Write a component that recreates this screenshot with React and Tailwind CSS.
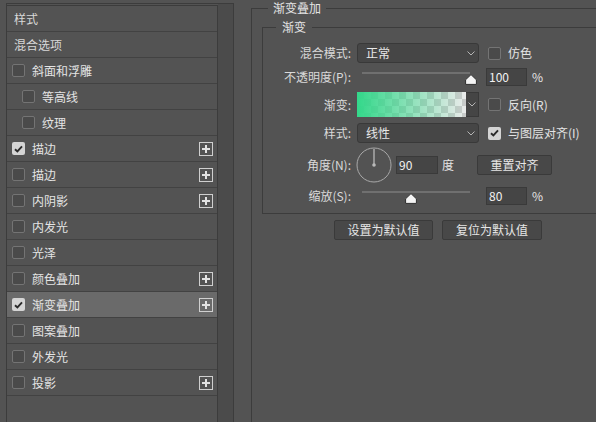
import React from "react";

function Box({ checked }) {
  if (checked) {
    return (
      <span className="w-[13px] h-[13px] rounded-[2px] bg-[#d4d4d4] flex items-center justify-center shrink-0">
        <svg width="9" height="8" viewBox="0 0 9 8">
          <path d="M1 4.2 L3.4 6.5 L8 1.4" fill="none" stroke="#2a2a2a" strokeWidth="1.9" />
        </svg>
      </span>
    );
  }
  return <span className="block w-[13px] h-[13px] rounded-[2px] border border-[#747474] bg-[#4a4a4a] shrink-0" />;
}

function Plus() {
  return (
    <span className="ml-auto mr-[4px] w-[14px] h-[14px] border border-[#cfcfcf] flex items-center justify-center shrink-0">
      <svg width="10" height="10" viewBox="0 0 10 10">
        <path d="M5 1V9M1 5H9" stroke="#e2e2e2" strokeWidth="2" />
      </svg>
    </span>
  );
}

function Row({ label, cb, checked, indent, plus, active }) {
  return (
    <div
      className={
        "h-[26px] border-b border-[#424242] flex items-center " +
        (active ? "bg-[#6a6a6a] " : "") +
        (cb ? (indent ? "pl-[15px]" : "pl-[5px]") : "pl-[7px]")
      }
    >
      {cb && <Box checked={checked} />}
      <span className={cb ? "ml-[7px] text-[#e4e4e4]" : "text-[#d8d8d8]"}>{label}</span>
      {plus && <Plus />}
    </div>
  );
}

function Chevron() {
  return (
    <svg width="8" height="5" viewBox="0 0 8 5" className="shrink-0">
      <path d="M0.5 0.5 L4 4 L7.5 0.5" fill="none" stroke="#b5b5b5" strokeWidth="1" />
    </svg>
  );
}

function Select({ value }) {
  return (
    <div className="ml-[6px] w-[122px] h-[20px] rounded-[3px] border border-[#393939] bg-[#464646] flex items-center pl-[8px] pr-[3px] shrink-0">
      <span className="text-[#e8e8e8]">{value}</span>
      <span className="ml-auto">
        <Chevron />
      </span>
    </div>
  );
}

function Thumb() {
  return (
    <svg width="12" height="11" viewBox="0 0 12 11">
      <path d="M6 0.6 L11.4 5.8 V10.4 H0.6 V5.8 Z" fill="#f4f4f4" stroke="#2e2e2e" strokeWidth="1" />
    </svg>
  );
}

function Slider({ pos }) {
  return (
    <div className="ml-[6px] w-[122px] h-[18px] relative shrink-0">
      <div className="absolute left-[5px] top-[4px] w-[108px] h-[2px] bg-[#707070]" />
      <div className="absolute top-[6px]" style={{ left: pos }}>
        <Thumb />
      </div>
    </div>
  );
}

function NumInput({ value, w }) {
  return (
    <div
      className={
        "h-[18px] border border-[#3a3a3a] bg-[#454545] flex items-center pl-[2px] text-[#f2f2f2] shrink-0 " +
        (w === 42 ? "w-[42px]" : "w-[41px]")
      }
    >
      {value}
    </div>
  );
}

function Label({ children }) {
  return <div className="w-[88px] text-right shrink-0 text-[#d9d9d9] whitespace-nowrap">{children}</div>;
}

function Gradient() {
  return (
    <div className="ml-[6px] w-[122px] h-[25px] flex shrink-0">
      <svg width="109" height="25" viewBox="0 0 109 25" className="shrink-0">
        <defs>
          <pattern id="chk" width="14" height="14" patternUnits="userSpaceOnUse">
            <rect width="14" height="14" fill="#ebebeb" />
            <rect width="7" height="7" fill="#cbcbcb" />
            <rect x="7" y="7" width="7" height="7" fill="#cbcbcb" />
          </pattern>
          <linearGradient id="grd" x1="0" x2="1" y1="0" y2="0">
            <stop offset="0" stopColor="#33d88a" stopOpacity="1" />
            <stop offset="1" stopColor="#33d88a" stopOpacity="0" />
          </linearGradient>
        </defs>
        <rect width="109" height="25" fill="url(#chk)" />
        <rect width="109" height="25" fill="url(#grd)" />
      </svg>
      <div className="flex-1 bg-[#454545] border border-l-0 border-[#393939] flex items-center justify-center">
        <Chevron />
      </div>
    </div>
  );
}

function Dial() {
  return (
    <svg width="36" height="36" viewBox="0 0 36 36" className="ml-[5px] shrink-0">
      <circle cx="18" cy="18" r="17" fill="none" stroke="#a9a9a9" strokeWidth="1" />
      <line x1="18" y1="2" x2="18" y2="18" stroke="#b9b9b9" strokeWidth="1.3" />
      <circle cx="18" cy="18" r="1.8" fill="#b9b9b9" />
    </svg>
  );
}

function Button({ children, w }) {
  return (
    <div
      className={
        "h-[20px] rounded-[2px] border border-[#3a3a3a] bg-[#484848] flex items-center justify-center text-[#e6e6e6] shrink-0 " +
        (w === 75 ? "w-[75px]" : w === 99 ? "w-[99px]" : "w-[100px]")
      }
    >
      {children}
    </div>
  );
}

export default function App() {
  return (
    <div className="w-[596px] h-[422px] overflow-hidden bg-[#535353] flex text-[12px] leading-[16px] text-[#dedede] font-['Noto_Sans_CJK_SC',sans-serif]">
      <div className="ml-[6px] mt-[3px] w-[228px] h-[440px] border-l border-t border-r border-[#3c3c3c] flex shrink-0">
        <div className="mt-[1px] w-[211px] border-t border-r border-[#3c3c3c] shrink-0">
          <Row label="样式" />
          <Row label="混合选项" />
          <Row label="斜面和浮雕" cb />
          <Row label="等高线" cb indent />
          <Row label="纹理" cb indent />
          <Row label="描边" cb checked plus />
          <Row label="描边" cb plus />
          <Row label="内阴影" cb plus />
          <Row label="内发光" cb />
          <Row label="光泽" cb />
          <Row label="颜色叠加" cb plus />
          <Row label="渐变叠加" cb checked plus active />
          <Row label="图案叠加" cb />
          <Row label="外发光" cb />
          <Row label="投影" cb plus />
        </div>
        <div className="flex-1 bg-[#4b4b4b]" />
      </div>

      <div className="ml-[17px] shrink-0">
        <fieldset className="w-[380px] h-[440px] border border-[#3c3c3c]">
          <legend className="ml-[16px] px-[5px] leading-[16px] text-[#e4e4e4]">渐变叠加</legend>
          <fieldset className="ml-[10px] mt-[3px] w-[360px] border border-[#3c3c3c] pt-[8px] pb-[8px]">
            <legend className="ml-[13px] px-[6px] leading-[16px] text-[#e4e4e4]">渐变</legend>

            <div className="h-[20px] flex items-center">
              <Label>混合模式:</Label>
              <Select value="正常" />
              <span className="ml-[9px]">
                <Box />
              </span>
              <span className="ml-[7px] text-[#e4e4e4]">仿色</span>
            </div>

            <div className="mt-[5px] h-[18px] flex items-center">
              <Label>不透明度(P):</Label>
              <Slider pos={108} />
              <span className="ml-[7px]">
                <NumInput value="100" />
              </span>
              <span className="ml-[5px] text-[#e4e4e4]">%</span>
            </div>

            <div className="mt-[6px] h-[25px] flex items-center">
              <Label>渐变:</Label>
              <Gradient />
              <span className="ml-[9px]">
                <Box />
              </span>
              <span className="ml-[7px] text-[#e4e4e4]">反向(R)</span>
            </div>

            <div className="mt-[6px] h-[20px] flex items-center">
              <Label>样式:</Label>
              <Select value="线性" />
              <span className="ml-[9px]">
                <Box checked />
              </span>
              <span className="ml-[7px] text-[#e4e4e4]">与图层对齐(I)</span>
            </div>

            <div className="mt-[4px] h-[36px] flex items-center">
              <Label>角度(N):</Label>
              <Dial />
              <span className="ml-[4px]">
                <NumInput value="90" w={42} />
              </span>
              <span className="ml-[4px] text-[#e4e4e4]">度</span>
              <span className="ml-[23px]">
                <Button w={75}>重置对齐</Button>
              </span>
            </div>

            <div className="mt-[4px] h-[18px] flex items-center">
              <Label>缩放(S):</Label>
              <Slider pos={48} />
              <span className="ml-[7px]">
                <NumInput value="80" />
              </span>
              <span className="ml-[5px] text-[#e4e4e4]">%</span>
            </div>
          </fieldset>

          <div className="mt-[6px] ml-[82px] flex gap-[9px]">
            <Button w={99}>设置为默认值</Button>
            <Button w={100}>复位为默认值</Button>
          </div>
        </fieldset>
      </div>
    </div>
  );
}
